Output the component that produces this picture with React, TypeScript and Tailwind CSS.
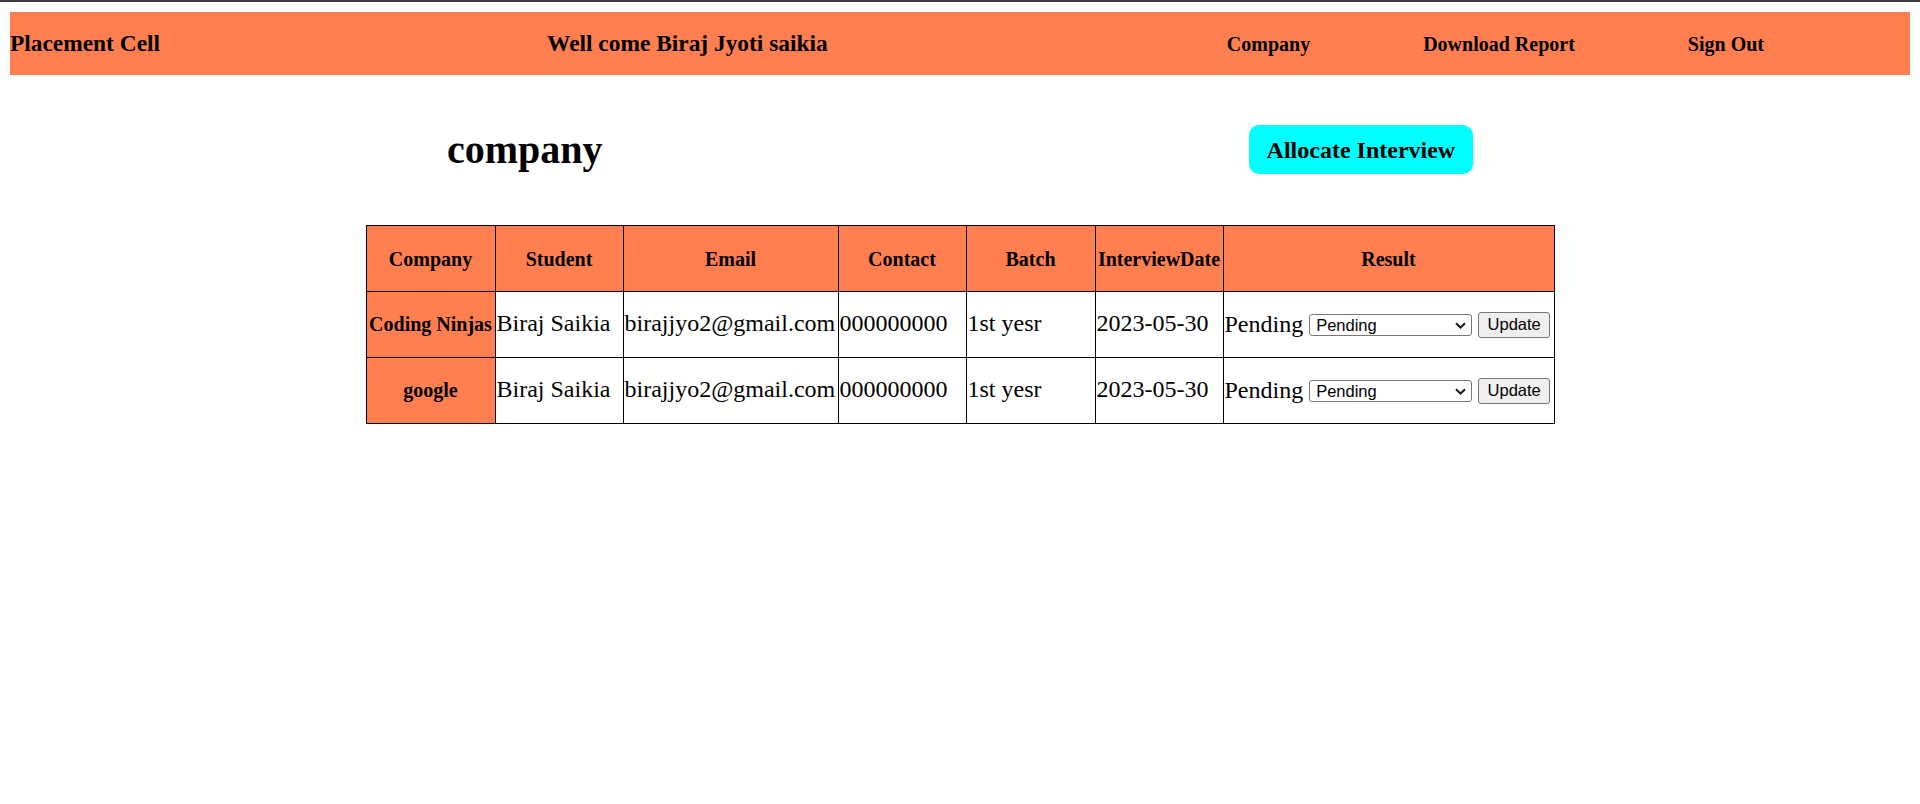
const rows = [
  { company: 'Coding Ninjas', student: 'Biraj Saikia', email: 'birajjyo2@gmail.com', contact: '000000000', batch: '1st yesr', date: '2023-05-30', result: 'Pending' },
  { company: 'google', student: 'Biraj Saikia', email: 'birajjyo2@gmail.com', contact: '000000000', batch: '1st yesr', date: '2023-05-30', result: 'Pending' },
];

const headers = ['Company', 'Student', 'Email', 'Contact', 'Batch', 'InterviewDate', 'Result'];
const widths = [129, 128, 215, 128, 129, 128, 331];

export default function App() {
  return (
    <div className="min-h-[804px] bg-white font-['Liberation_Serif','Times_New_Roman',serif] text-black">
      <div className="h-[2px] bg-[#3c3c3c]" />

      {/* Top navigation bar */}
      <div className="px-[10px] pt-[10px]">
        <header className="flex h-[63px] items-center bg-[#ff7f50]">
          <h3 className="text-[23.4px] font-bold whitespace-nowrap">Placement Cell</h3>
          <h3 className="ml-[387px] text-[23.4px] font-bold whitespace-nowrap">Well come Biraj Jyoti saikia</h3>
          <nav className="ml-auto mr-[146px]">
            <ul className="flex gap-[113px] text-[20px] font-bold whitespace-nowrap">
              <li>Company</li>
              <li>Download Report</li>
              <li>Sign Out</li>
            </ul>
          </nav>
        </header>
      </div>

      {/* Title row */}
      <div className="mt-[50px] flex h-[49px] items-center pl-[447px]">
        <h1 className="text-[40px] font-bold leading-[44px]">company</h1>
        <button className="ml-[646px] h-[49px] rounded-[10px] bg-[#00ffff] px-[18px] text-[24px] font-bold whitespace-nowrap">
          Allocate Interview
        </button>
      </div>

      {/* Interview table */}
      <table className="mx-auto mt-[51px] w-[1188px] table-fixed border-collapse">
        <colgroup>
          {widths.map((w, i) => (
            <col key={i} style={{ width: w }} />
          ))}
        </colgroup>
        <thead>
          <tr className="h-[66px]">
            {headers.map((h) => (
              <th key={h} className="border border-black bg-[#ff7f50] p-px text-center text-[20px] font-bold whitespace-nowrap">
                {h}
              </th>
            ))}
          </tr>
        </thead>
        <tbody>
          {rows.map((r) => (
            <tr key={r.company} className="h-[66px]">
              <th className="border border-black bg-[#ff7f50] p-px pb-[2px] text-center text-[20px] font-bold whitespace-nowrap">
                {r.company}
              </th>
              <td className="border border-black p-px pb-[4px] text-[24px] whitespace-nowrap">{r.student}</td>
              <td className="border border-black p-px pb-[4px] text-[24px] whitespace-nowrap">{r.email}</td>
              <td className="border border-black p-px pb-[4px] text-[24px] whitespace-nowrap">{r.contact}</td>
              <td className="border border-black p-px pb-[4px] text-[24px] whitespace-nowrap">{r.batch}</td>
              <td className="border border-black p-px pb-[4px] text-[24px] whitespace-nowrap">{r.date}</td>
              <td className="border border-black p-px pb-[3px] text-[24px] whitespace-nowrap">
                <span className="align-middle">{r.result}</span>{' '}
                <span className="relative inline-block align-middle leading-none">
                  <select
                    defaultValue="Pending"
                    className="block h-[22px] w-[163px] appearance-none rounded-[3px] border border-[#767676] bg-white pl-[6px] font-['Liberation_Sans',Arial,sans-serif] text-[16.5px] leading-[20px]"
                  >
                    <option>Pending</option>
                    <option>Passed</option>
                    <option>Failed</option>
                  </select>
                  <svg
                    className="pointer-events-none absolute right-[6px] top-[8px]"
                    width="11"
                    height="7"
                    viewBox="0 0 11 7"
                    fill="none"
                  >
                    <path d="M1 1.2L5.5 5.5L10 1.2" stroke="#1a1a1a" strokeWidth="2" />
                  </svg>
                </span>{' '}
                <button className="h-[26px] w-[72px] rounded-[3px] border border-[#767676] bg-[#efefef] align-middle font-['Liberation_Sans',Arial,sans-serif] text-[16.5px] leading-none">
                  Update
                </button>
              </td>
            </tr>
          ))}
        </tbody>
      </table>
    </div>
  );
}
